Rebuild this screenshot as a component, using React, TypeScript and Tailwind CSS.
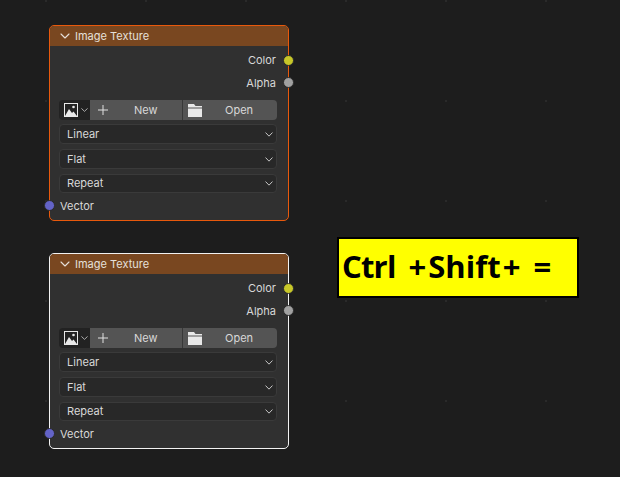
function Chevron({ className }: { className: string }) {
  return (
    <svg viewBox="0 0 10 6" className={className} fill="none" stroke="currentColor" strokeWidth="1.1" strokeLinecap="round" strokeLinejoin="round" preserveAspectRatio="none">
      <path d="M1 1l4 4 4-4" />
    </svg>
  );
}

function Select({ label, className }: { label: string; className: string }) {
  return (
    <div className={`flex items-center justify-between rounded-[4px] border border-[#3a3a3a] bg-[#282828] pl-[7px] pr-[3px] text-[#d8d8d8] ${className}`}>
      <span>{label}</span>
      <Chevron className="h-[5px] w-[8px] text-[#d8d8d8]" />
    </div>
  );
}

function ImageTextureNode({ border }: { border: string }) {
  return (
    <div className={`absolute left-[49px] h-[196px] w-[240px] rounded-[5px] border bg-[#303030] text-[11px] ${border}`}>
      <div className="flex h-[20px] items-center rounded-t-[4px] bg-[#794720] pl-[10px] text-[#e6e0da]">
        <Chevron className="h-[6px] w-[10px] text-[#e6e0da]" />
        <span className="ml-[5px]">Image Texture</span>
      </div>
      <div className="flex flex-col pl-[9px] pr-[11px]">
        <div className="relative mt-[4px] flex h-[20px] items-center justify-end pr-[1px] text-[#d8d8d8]">
          <span>Color</span>
          <span className="absolute right-[-17px] top-[5px] h-[11px] w-[11px] rounded-full border border-[#2a2a2a] bg-[#c7c729]" />
        </div>
        <div className="relative mt-[3px] flex h-[20px] items-center justify-end pr-[1px] text-[#d8d8d8]">
          <span>Alpha</span>
          <span className="absolute right-[-17px] top-[4px] h-[11px] w-[11px] rounded-full border border-[#2a2a2a] bg-[#a1a1a1]" />
        </div>
        <div className="mt-[7px] flex h-[20px] overflow-hidden rounded-[4px] text-[#d8d8d8]">
          <div className="flex w-[31px] items-center gap-[3px] bg-[#222222] pl-[5px]">
            <svg viewBox="0 0 14 14" className="h-[14px] w-[14px] shrink-0">
              <path fill="#e8e8e8" fillRule="evenodd" d="M0 0h14v14H0z M1 1v12h12V1z" />
              <circle cx="9.500" cy="4" r="1.300" fill="#e8e8e8" />
              <path fill="#e8e8e8" d="M1 13l4-7 3 4 1.500-1.500L13 13z" />
            </svg>
            <Chevron className="h-[4px] w-[7px] shrink-0 text-[#d8d8d8]" />
          </div>
          <div className="flex w-[93px] items-center border-r border-[#383838] bg-[#545454] pl-[8px]">
            <svg viewBox="0 0 10 10" className="h-[10px] w-[10px] shrink-0" stroke="#e0e0e0" strokeWidth="1">
              <path d="M5 0v10M0 5h10" />
            </svg>
            <span className="ml-[26px]">New</span>
          </div>
          <div className="flex flex-1 items-center bg-[#545454] pl-[5px]">
            <svg viewBox="0 0 14 13" className="h-[13px] w-[14px] shrink-0" fill="#e8e8e8">
              <path d="M0 0h6l1.500 2H14v1.500H0z M0 4.500h14V13H0z" />
            </svg>
            <span className="ml-[23px]">Open</span>
          </div>
        </div>
        <Select label="Linear" className="mt-[4px] h-[20px]" />
        <Select label="Flat" className="mt-[5px] h-[20px]" />
        <Select label="Repeat" className="mt-[5px] h-[19px]" />
        <div className="relative mt-[3px] flex h-[20px] items-center pl-[1px] text-[#d8d8d8]">
          <span>Vector</span>
          <span className="absolute left-[-15px] top-[4px] h-[11px] w-[11px] rounded-full border border-[#2a2a2a] bg-[#6363c7]" />
        </div>
      </div>
    </div>
  );
}

export default function App() {
  return (
    <div className="relative h-[477px] w-[620px] overflow-hidden bg-[#1d1d1d] bg-[radial-gradient(circle,#2a2a2a_1px,transparent_1.5px)] bg-[size:100px_100px] bg-[position:-4px_-49px] font-['Inter',sans-serif]">
      <div className="absolute top-[25px] left-0">
        <ImageTextureNode border="border-[#e8590c]" />
      </div>
      <div className="absolute top-[253px] left-0">
        <ImageTextureNode border="border-[#f2f2f2]" />
      </div>
      <div className="absolute left-[337px] top-[237px] flex h-[61px] w-[242px] items-center border-2 border-black bg-[#ffff00] pb-[3px] pl-[3px] font-['Open_Sans',sans-serif] text-[31px] font-bold text-black">
        <span className="tracking-[-0.8px]">Ctrl</span>
        <span className="ml-[13px]">+</span>
        <span className="ml-[2px]">Shift</span>
        <span className="ml-[2px]">+</span>
        <span className="ml-[13px]">=</span>
      </div>
    </div>
  );
}
